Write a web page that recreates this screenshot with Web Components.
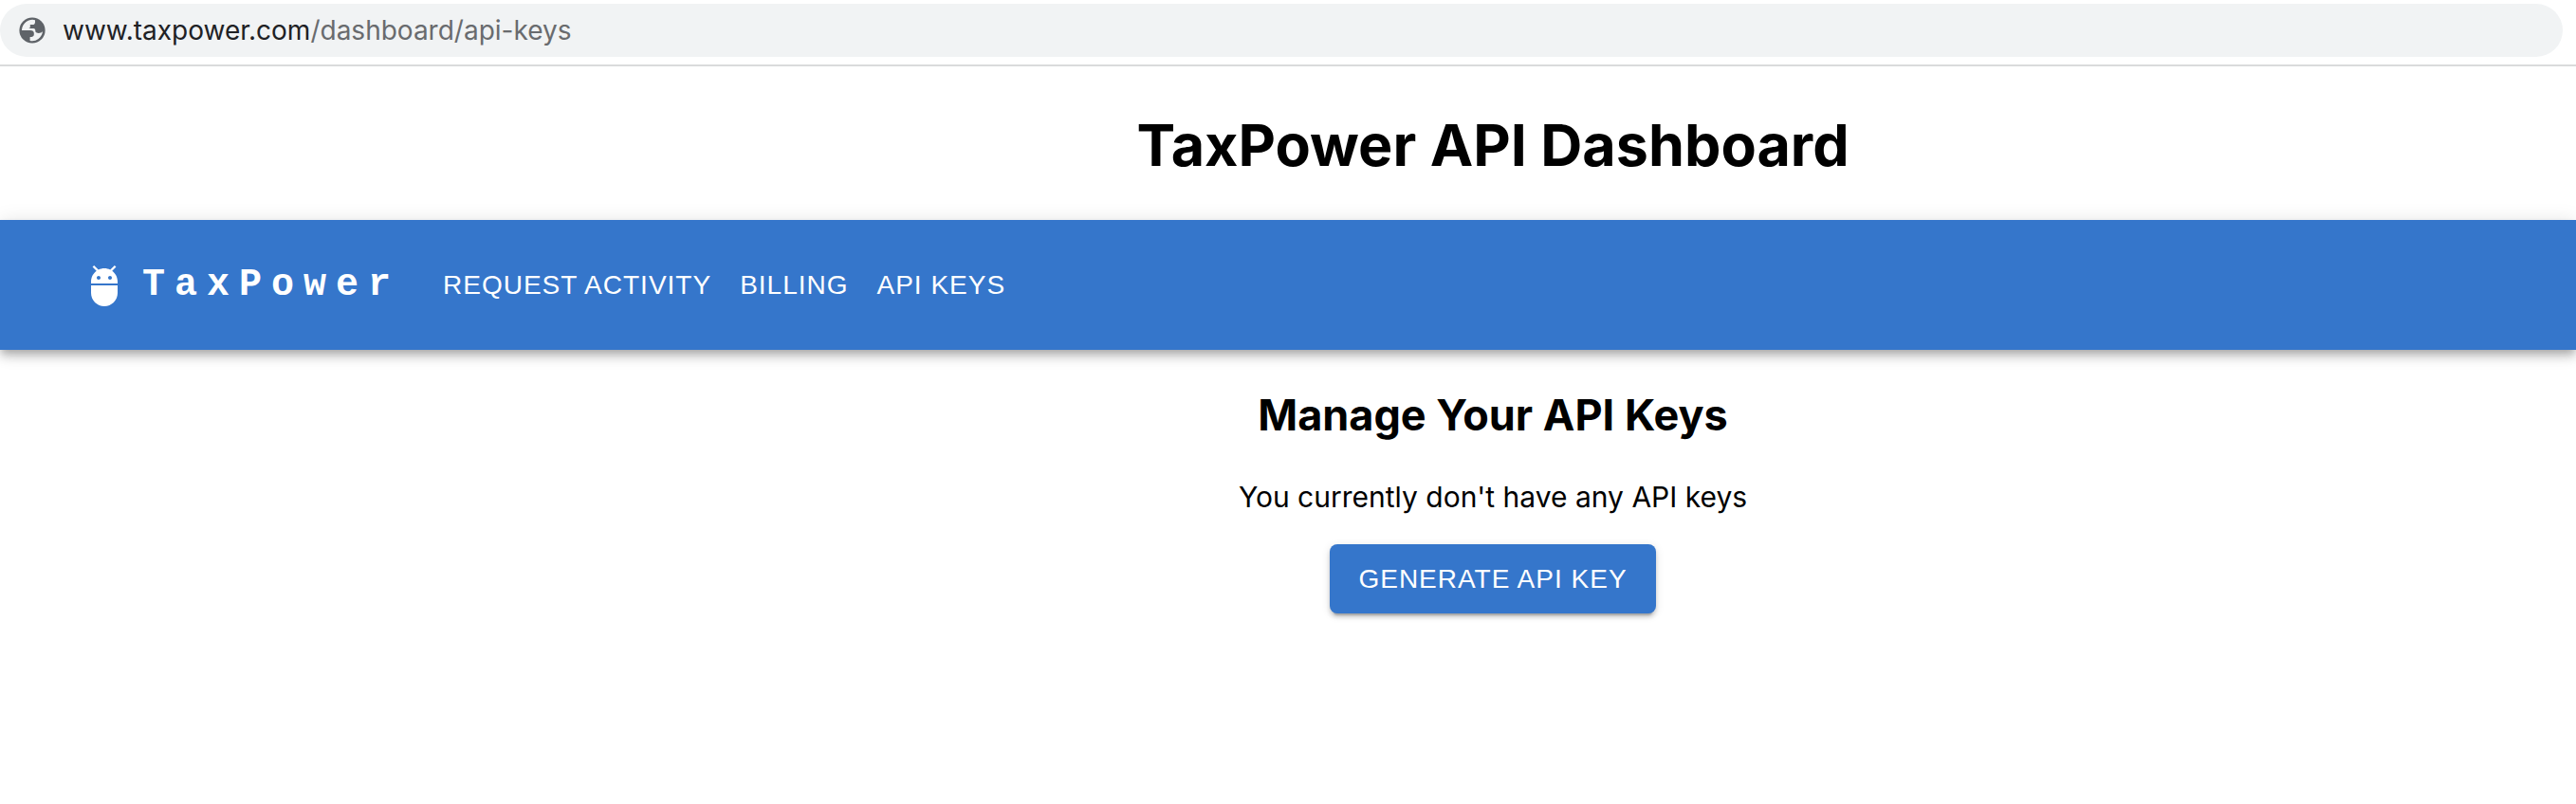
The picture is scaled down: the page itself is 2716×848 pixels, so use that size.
<!DOCTYPE html>
<html lang="en">
<head>
<meta charset="utf-8">
<title>TaxPower API Dashboard</title>
<style>
body { margin: 0; background: #fff; color: #000; font-family: Inter, sans-serif; }
</style>
</head>
<body>
<dashboard-page></dashboard-page>
<script>
const define = (name, html) => {
  const template = document.createElement('template');
  template.innerHTML = html;
  customElements.define(name, class extends HTMLElement {
    constructor() {
      super();
      this.attachShadow({ mode: 'open' }).append(template.content.cloneNode(true));
    }
  });
};

define('address-bar', `
<style>
:host { display: block; padding: 4px 14px 8px 0; border-bottom: 2px solid #dadbdc; }
.pill { display: flex; align-items: center; gap: 16px; height: 56px; padding-left: 18px; border-radius: 28px; background: #f1f3f4; color: #696b6e; font-size: 28px; }
svg { width: 32px; height: 32px; flex: none; }
b { font-weight: 400; color: #202124; }
</style>
<div class="pill">
  <svg viewBox="0 0 32 32" aria-hidden="true"><circle cx="16" cy="16" r="13.6" fill="#5f6368"/><path fill="#f1f3f4" d="M5 15.4A11.2 11.2 0 0 1 19 5.2V7.4C19 9 17.8 10 16.4 10H13.8V12.4C13.8 13.2 13.2 13.8 12.2 13.9H17.4C19 14 19.4 15.2 19.4 17.6C20.6 19.4 25 19.6 27 17A11.2 11.2 0 0 1 13.6 26.9V23C16 23 17.8 22.4 17.8 20.4V19C17.8 17.2 16.4 16 14 16H5Z"/></svg>
  <span><b><slot name="host"></slot></b><slot></slot></span>
</div>`);

define('nav-link', `
<style>
:host { display: block; }
a { display: block; padding: 12px 15px; color: #fff; font: 28px/48px "Liberation Sans", sans-serif; letter-spacing: 1px; text-transform: uppercase; text-decoration: none; }
</style>
<a href="#"><slot></slot></a>`);

define('brand-logo', `
<style>
:host { display: block; }
a { display: flex; align-items: center; gap: 16px; color: #fff; font: 700 40px/64px "Liberation Mono", monospace; letter-spacing: 10px; text-decoration: none; }
svg { width: 48px; height: 48px; fill: currentColor; }
</style>
<a href="#">
  <svg viewBox="0 0 24 24" aria-hidden="true"><path d="M5 16c0 3.87 3.13 7 7 7s7-3.13 7-7v-4H5v4zM16.12 4.37l2.1-2.1-.82-.83-2.3 2.31C14.16 3.28 13.12 3 12 3s-2.14.28-3.09.75L6.6 1.44l-.82.83 2.1 2.1C6.14 5.64 5 7.68 5 10v1h14v-1c0-2.32-1.14-4.36-2.88-5.63zM9 9c-.55 0-1-.45-1-1s.45-1 1-1 1 .45 1 1-.45 1-1 1zm6 0c-.55 0-1-.45-1-1s.45-1 1-1 1 .45 1 1-.45 1-1 1z"/></svg>
  <slot></slot>
</a>`);

define('app-bar', `
<style>
:host { display: block; background: #3576cb; box-shadow: 0 4px 8px -2px rgba(0,0,0,.2), 0 8px 10px rgba(0,0,0,.14), 0 2px 20px rgba(0,0,0,.12); }
nav { display: flex; align-items: center; min-height: 137px; padding: 0 86px; gap: 30px; }
.links { display: flex; }
</style>
<nav><slot name="brand"></slot><div class="links"><slot></slot></div></nav>`);

define('action-button', `
<style>
:host { display: block; }
button { display: block; border: 0; border-radius: 8px; padding: 12px 30px; background: #3576cb; color: #fff; font: 28px/49px "Liberation Sans", sans-serif; letter-spacing: 1px; text-transform: uppercase; box-shadow: 0 6px 2px -4px rgba(0,0,0,.2), 0 4px 4px rgba(0,0,0,.14), 0 2px 10px rgba(0,0,0,.12); }
</style>
<button type="button"><slot></slot></button>`);

define('key-manager', `
<style>
:host { display: flex; flex-direction: column; align-items: center; padding: 40px 0; }
h2 { margin: 0; font-size: 45px; line-height: 58px; }
p { margin: 39px 0 32px; font-size: 30px; line-height: 36px; }
</style>
<h2>Manage Your API Keys</h2>
<p>You currently don't have any API keys</p>
<action-button>Generate API Key</action-button>`);

define('dashboard-page', `
<style>
:host { display: block; }
h1 { margin: 0; padding: 44px 0 40px; font-size: 61px; line-height: 78px; text-align: center; }
h1, key-manager { margin-left: 432px; }
</style>
<address-bar><span slot="host">www.taxpower.com</span>/dashboard/api-keys</address-bar>
<main>
  <h1>TaxPower API Dashboard</h1>
  <app-bar>
    <brand-logo slot="brand">TaxPower</brand-logo>
    <nav-link>Request Activity</nav-link>
    <nav-link>Billing</nav-link>
    <nav-link>API Keys</nav-link>
  </app-bar>
  <key-manager></key-manager>
</main>`);
</script>
</body>
</html>
